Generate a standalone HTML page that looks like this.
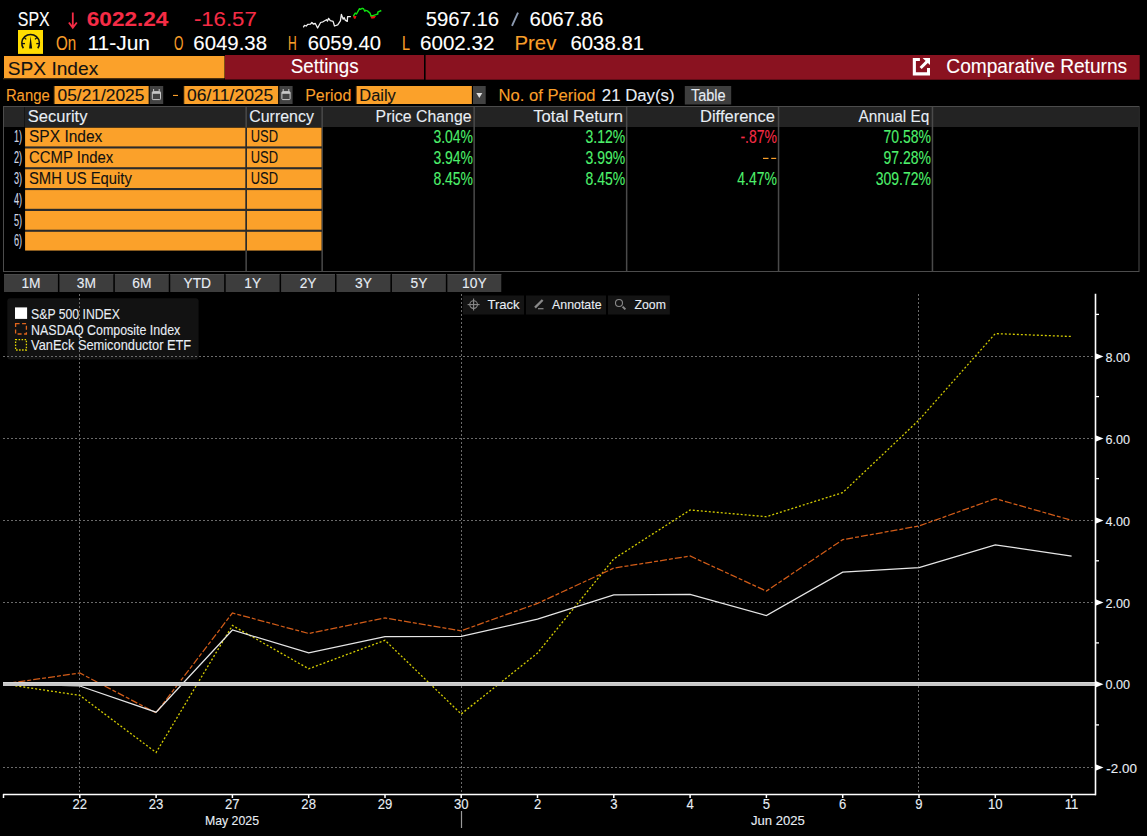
<!DOCTYPE html>
<html><head><meta charset="utf-8"><style>
html,body{margin:0;padding:0;background:#000;width:1147px;height:836px;overflow:hidden}
svg{display:block}
text{font-family:"Liberation Sans",sans-serif;white-space:pre}
</style></head><body>
<svg width="1147" height="836" viewBox="0 0 1147 836">
<rect width="1147" height="836" fill="#000"/>
<text transform="translate(17.80,26.00) scale(0.783,1)" font-size="20.35" fill="#ffffff" stroke="#ffffff" stroke-width="0.1" font-weight="normal">SPX</text>
<text transform="translate(86.80,26.00) scale(1.109,1)" font-size="20.35" fill="#f52c46" stroke="#f52c46" stroke-width="0.1" font-weight="bold">6022.24</text>
<text transform="translate(193.90,26.00) scale(1.089,1)" font-size="20.35" fill="#f52c46" stroke="#f52c46" stroke-width="0.1" font-weight="normal">-16.57</text>
<text transform="translate(425.80,25.80) scale(1.035,1)" font-size="19.62" fill="#ffffff" stroke="#ffffff" stroke-width="0.1" font-weight="normal">5967.16</text>
<text transform="translate(529.60,25.80) scale(1.040,1)" font-size="19.62" fill="#ffffff" stroke="#ffffff" stroke-width="0.1" font-weight="normal">6067.86</text>
<line x1="512" y1="25.8" x2="518" y2="12.6" stroke="#8c9ab0" stroke-width="1.9"/>
<path d="M72.8 12.4 V27 M68.9 22.5 L72.8 27.8 L76.8 22.5" stroke="#f52c46" stroke-width="1.8" fill="none"/>
<text transform="translate(55.90,49.80) scale(0.777,1)" font-size="19.48" fill="#f99f2a" stroke="#f99f2a" stroke-width="0.1" font-weight="normal">On</text>
<text transform="translate(87.40,49.80) scale(1.077,1)" font-size="19.48" fill="#ffffff" stroke="#ffffff" stroke-width="0.1" font-weight="normal">11-Jun</text>
<text transform="translate(174.00,49.80) scale(0.620,1)" font-size="19.48" fill="#f99f2a" stroke="#f99f2a" stroke-width="0.1" font-weight="normal">O</text>
<text transform="translate(193.30,49.80) scale(1.047,1)" font-size="19.48" fill="#ffffff" stroke="#ffffff" stroke-width="0.1" font-weight="normal">6049.38</text>
<text transform="translate(288.00,49.80) scale(0.619,1)" font-size="19.48" fill="#f99f2a" stroke="#f99f2a" stroke-width="0.1" font-weight="normal">H</text>
<text transform="translate(307.80,49.80) scale(1.040,1)" font-size="19.48" fill="#ffffff" stroke="#ffffff" stroke-width="0.1" font-weight="normal">6059.40</text>
<text transform="translate(402.00,49.80) scale(0.739,1)" font-size="19.48" fill="#f99f2a" stroke="#f99f2a" stroke-width="0.1" font-weight="normal">L</text>
<text transform="translate(420.00,49.80) scale(1.057,1)" font-size="19.48" fill="#ffffff" stroke="#ffffff" stroke-width="0.1" font-weight="normal">6002.32</text>
<text transform="translate(514.50,49.80) scale(1.046,1)" font-size="19.48" fill="#f99f2a" stroke="#f99f2a" stroke-width="0.1" font-weight="normal">Prev</text>
<text transform="translate(570.40,49.80) scale(1.048,1)" font-size="19.48" fill="#ffffff" stroke="#ffffff" stroke-width="0.1" font-weight="normal">6038.81</text>
<rect x="18.00" y="30.00" width="25.00" height="23.90" fill="#ffdc00" />
<path d="M23.4 48.3 A 8.8 8.8 0 1 1 37.8 48.3" fill="none" stroke="#111" stroke-width="1.5"/>
<path d="M29.1 48.6 L30.6 35.9 L32.1 48.6 Z" fill="#111"/>
<g stroke="#111" stroke-width="1.3"><line x1="21.8" y1="43.6" x2="25" y2="43.6"/><line x1="36.3" y1="43.6" x2="39.5" y2="43.6"/><line x1="24.3" y1="37.5" x2="26.2" y2="39.4"/><line x1="36.9" y1="37.5" x2="35" y2="39.4"/></g>
<polyline points="303.3,27.3 304.5,25.4 306.3,26 307.7,24.4 310.5,24.2 311.9,22.5 313.3,24 315.3,23.5 317.6,28 320.6,22.5 323,21.8 326.5,19.7 327.5,21.1 328.6,18.3 330.3,20.7 333.1,21.4 334.5,26 337.7,24.9 338.6,23.6 340.4,20.9 341.4,14.4 342.5,17.5 343.2,19.2 344.1,17.5 345.2,20.1 347.3,21.4 347.6,16.6 350.8,16.6" fill="none" stroke="#f0f0f0" stroke-width="1.3" stroke-linejoin="round"/>
<path d="M353 16 H356.5 L355.5 18.8 H354 Z M370.2 16 H376 L374.5 18.3 L371.5 18.8 Z" fill="#e81010"/>
<polyline points="353.4,16.1 355.2,13.1 356.5,14 359.5,8.7 360.4,9.4 362.2,8.3 363.5,8.7 364.8,11.3 365.6,10.3 367.4,10.9 370,13.1 370.9,15.7 373,15.7 375.2,14.8 377.8,14 377.8,12.2 381.3,10.5" fill="none" stroke="#10e010" stroke-width="1.4" stroke-linejoin="round"/>
<rect x="4.00" y="56.00" width="220.50" height="22.00" fill="#fba12a" />
<rect x="3.00" y="78.00" width="221.50" height="1.30" fill="#4a3010" />
<rect x="225.00" y="55.00" width="199.00" height="24.50" fill="#8a1220" />
<rect x="425.60" y="55.00" width="714.10" height="24.70" fill="#8a1220" />
<text transform="translate(7.80,74.60) scale(1.006,1)" font-size="19.04" fill="#111" stroke="#111" stroke-width="0.1" font-weight="normal">SPX Index</text>
<text transform="translate(290.70,72.70) scale(0.945,1)" font-size="19.91" fill="#ffffff" stroke="#ffffff" stroke-width="0.1" font-weight="normal">Settings</text>
<text transform="translate(946.30,72.60) scale(0.969,1)" font-size="19.77" fill="#ffffff" stroke="#ffffff" stroke-width="0.1" font-weight="normal">Comparative Returns</text>
<path d="M912.8 58 H919.9 V61.1 H915.9 V72.3 H927 V68 H930 V75.6 H912.8 Z" fill="#fff"/>
<path d="M922.6 58 H930 V65 Z" fill="#fff"/>
<line x1="920.6" y1="68" x2="927.5" y2="61.1" stroke="#fff" stroke-width="3"/>
<text transform="translate(5.90,101.20) scale(0.921,1)" font-size="16.13" fill="#f99f2a" stroke="#f99f2a" stroke-width="0.1" font-weight="normal">Range</text>
<rect x="53.60" y="86.00" width="95.00" height="18.00" fill="#3a2a10" />
<rect x="54.60" y="86.00" width="94.00" height="18.00" fill="#fba12a" />
<text transform="translate(57.50,101.20) scale(1.077,1)" font-size="16.13" fill="#111" stroke="#111" stroke-width="0.1" font-weight="normal">05/21/2025</text>
<rect x="149.70" y="86.00" width="13.50" height="18.00" fill="#424242" />
<rect x="173.00" y="94.90" width="5.00" height="1.10" fill="#f99f2a" />
<rect x="183.30" y="86.00" width="94.80" height="18.00" fill="#3a2a10" />
<rect x="184.30" y="86.00" width="93.80" height="18.00" fill="#fba12a" />
<text transform="translate(187.10,101.20) scale(1.085,1)" font-size="16.13" fill="#111" stroke="#111" stroke-width="0.1" font-weight="normal">06/11/2025</text>
<rect x="279.40" y="86.00" width="13.20" height="18.00" fill="#424242" />
<g fill="none" stroke="#c8c8c8" stroke-width="1"><rect x="152.3" y="91.6" width="8.2" height="8" rx="0.8"/><line x1="152.3" y1="92.9" x2="160.5" y2="92.9" stroke-width="1.8"/><line x1="153.6" y1="89" x2="153.6" y2="91.6"/><line x1="159.2" y1="89" x2="159.2" y2="91.6"/></g>
<g fill="none" stroke="#c8c8c8" stroke-width="1"><rect x="281.9" y="91.6" width="8.2" height="8" rx="0.8"/><line x1="281.9" y1="92.9" x2="290.1" y2="92.9" stroke-width="1.8"/><line x1="283.2" y1="89" x2="283.2" y2="91.6"/><line x1="288.8" y1="89" x2="288.8" y2="91.6"/></g>
<text transform="translate(305.20,101.20) scale(0.991,1)" font-size="16.13" fill="#f99f2a" stroke="#f99f2a" stroke-width="0.1" font-weight="normal">Period</text>
<rect x="355.70" y="86.00" width="116.10" height="18.00" fill="#3a2a10" />
<rect x="356.70" y="86.00" width="115.10" height="18.00" fill="#fba12a" />
<text transform="translate(359.30,101.20) scale(1.020,1)" font-size="16.13" fill="#111" stroke="#111" stroke-width="0.1" font-weight="normal">Daily</text>
<rect x="473.00" y="86.00" width="12.70" height="18.00" fill="#424242" />
<path d="M476.3 93 H482.3 L479.3 98 Z" fill="#ddd"/>
<text transform="translate(498.60,101.20) scale(1.030,1)" font-size="16.13" fill="#f99f2a" stroke="#f99f2a" stroke-width="0.1" font-weight="normal">No. of Period</text>
<text transform="translate(601.80,101.20) scale(1.041,1)" font-size="16.13" fill="#e8eef5" stroke="#e8eef5" stroke-width="0.1" font-weight="normal">21 Day(s)</text>
<rect x="684.80" y="86.00" width="46.40" height="18.50" fill="#3e3e3e" />
<text transform="translate(690.90,101.20) scale(0.900,1)" font-size="16.13" fill="#e8eef5" stroke="#e8eef5" stroke-width="0.1" font-weight="normal">Table</text>
<rect x="3.00" y="106.00" width="1136.50" height="166.00" fill="#4c4c4c" />
<rect x="4.00" y="107.00" width="1134.50" height="164.00" fill="#000" />
<rect x="4.00" y="107.00" width="1134.50" height="20.00" fill="#232323" />
<rect x="4.00" y="107.00" width="20.50" height="20.00" fill="#262626" />
<rect x="245.40" y="107.00" width="1.50" height="164.00" fill="#4a4a4a" />
<rect x="321.40" y="107.00" width="1.50" height="164.00" fill="#4a4a4a" />
<rect x="473.40" y="107.00" width="1.50" height="164.00" fill="#4a4a4a" />
<rect x="625.90" y="107.00" width="1.50" height="164.00" fill="#4a4a4a" />
<rect x="777.80" y="107.00" width="1.50" height="164.00" fill="#4a4a4a" />
<rect x="931.70" y="107.00" width="1.50" height="164.00" fill="#4a4a4a" />
<rect x="24.00" y="107.00" width="1.00" height="20.00" fill="#151515" />
<text transform="translate(27.80,122.20) scale(0.964,1)" font-size="17.15" fill="#e8eef5" stroke="#e8eef5" stroke-width="0.1" font-weight="normal">Security</text>
<text transform="translate(249.20,122.20) scale(0.930,1)" font-size="17.15" fill="#e8eef5" stroke="#e8eef5" stroke-width="0.1" font-weight="normal">Currency</text>
<text transform="translate(375.60,122.20) scale(0.923,1)" font-size="17.15" fill="#e8eef5" stroke="#e8eef5" stroke-width="0.1" font-weight="normal">Price Change</text>
<text transform="translate(533.30,122.20) scale(0.970,1)" font-size="17.15" fill="#e8eef5" stroke="#e8eef5" stroke-width="0.1" font-weight="normal">Total Return</text>
<text transform="translate(700.00,122.20) scale(0.963,1)" font-size="17.15" fill="#e8eef5" stroke="#e8eef5" stroke-width="0.1" font-weight="normal">Difference</text>
<text transform="translate(858.40,122.20) scale(0.897,1)" font-size="17.15" fill="#e8eef5" stroke="#e8eef5" stroke-width="0.1" font-weight="normal">Annual Eq</text>
<rect x="25.10" y="127.70" width="296.40" height="122.80" fill="#2a2a2a" />
<rect x="25.10" y="127.70" width="220.20" height="18.70" fill="#fba12a" />
<rect x="247.00" y="127.70" width="74.50" height="18.70" fill="#fba12a" />
<rect x="4.00" y="127.70" width="20.50" height="18.70" fill="#000" />
<rect x="25.10" y="148.50" width="220.20" height="18.70" fill="#fba12a" />
<rect x="247.00" y="148.50" width="74.50" height="18.70" fill="#fba12a" />
<rect x="4.00" y="148.50" width="20.50" height="18.70" fill="#000" />
<rect x="25.10" y="169.30" width="220.20" height="18.70" fill="#fba12a" />
<rect x="247.00" y="169.30" width="74.50" height="18.70" fill="#fba12a" />
<rect x="4.00" y="169.30" width="20.50" height="18.70" fill="#000" />
<rect x="25.10" y="190.10" width="220.20" height="18.70" fill="#fba12a" />
<rect x="247.00" y="190.10" width="74.50" height="18.70" fill="#fba12a" />
<rect x="4.00" y="190.10" width="20.50" height="18.70" fill="#000" />
<rect x="25.10" y="211.00" width="220.20" height="18.70" fill="#fba12a" />
<rect x="247.00" y="211.00" width="74.50" height="18.70" fill="#fba12a" />
<rect x="4.00" y="211.00" width="20.50" height="18.70" fill="#000" />
<rect x="25.10" y="231.80" width="220.20" height="18.70" fill="#fba12a" />
<rect x="247.00" y="231.80" width="74.50" height="18.70" fill="#fba12a" />
<rect x="4.00" y="231.80" width="20.50" height="18.70" fill="#000" />
<text transform="translate(29.00,141.70) scale(0.938,1)" font-size="16.57" fill="#111" stroke="#111" stroke-width="0.1" font-weight="normal">SPX Index</text>
<text transform="translate(250.70,141.70) scale(0.780,1)" font-size="16.57" fill="#111" stroke="#111" stroke-width="0.1" font-weight="normal">USD</text>
<text transform="translate(29.00,162.70) scale(0.900,1)" font-size="16.57" fill="#111" stroke="#111" stroke-width="0.1" font-weight="normal">CCMP Index</text>
<text transform="translate(250.70,162.70) scale(0.780,1)" font-size="16.57" fill="#111" stroke="#111" stroke-width="0.1" font-weight="normal">USD</text>
<text transform="translate(29.00,183.70) scale(0.894,1)" font-size="16.57" fill="#111" stroke="#111" stroke-width="0.1" font-weight="normal">SMH US Equity</text>
<text transform="translate(250.70,183.70) scale(0.780,1)" font-size="16.57" fill="#111" stroke="#111" stroke-width="0.1" font-weight="normal">USD</text>
<text transform="translate(14.00,141.90) scale(0.570,1)" font-size="15.99" fill="#cfd8e6" stroke="#cfd8e6" stroke-width="0.1" font-weight="normal">1)</text>
<text transform="translate(14.00,162.80) scale(0.570,1)" font-size="15.99" fill="#cfd8e6" stroke="#cfd8e6" stroke-width="0.1" font-weight="normal">2)</text>
<text transform="translate(14.00,183.70) scale(0.570,1)" font-size="15.99" fill="#cfd8e6" stroke="#cfd8e6" stroke-width="0.1" font-weight="normal">3)</text>
<text transform="translate(14.00,204.60) scale(0.570,1)" font-size="15.99" fill="#cfd8e6" stroke="#cfd8e6" stroke-width="0.1" font-weight="normal">4)</text>
<text transform="translate(14.00,225.50) scale(0.570,1)" font-size="15.99" fill="#cfd8e6" stroke="#cfd8e6" stroke-width="0.1" font-weight="normal">5)</text>
<text transform="translate(14.00,246.40) scale(0.570,1)" font-size="15.99" fill="#cfd8e6" stroke="#cfd8e6" stroke-width="0.1" font-weight="normal">6)</text>
<text transform="translate(433.40,143.00) scale(0.796,1)" font-size="17.59" fill="#4ef06c" stroke="#4ef06c" stroke-width="0.1" font-weight="normal">3.04%</text>
<text transform="translate(585.50,143.00) scale(0.796,1)" font-size="17.59" fill="#4ef06c" stroke="#4ef06c" stroke-width="0.1" font-weight="normal">3.12%</text>
<text transform="translate(740.42,143.00) scale(0.796,1)" font-size="17.59" fill="#f52c46" stroke="#f52c46" stroke-width="0.1" font-weight="normal">-.87%</text>
<text transform="translate(883.50,143.00) scale(0.796,1)" font-size="17.59" fill="#4ef06c" stroke="#4ef06c" stroke-width="0.1" font-weight="normal">70.58%</text>
<text transform="translate(433.40,163.90) scale(0.796,1)" font-size="17.59" fill="#4ef06c" stroke="#4ef06c" stroke-width="0.1" font-weight="normal">3.94%</text>
<text transform="translate(585.50,163.90) scale(0.796,1)" font-size="17.59" fill="#4ef06c" stroke="#4ef06c" stroke-width="0.1" font-weight="normal">3.99%</text>
<rect x="763.00" y="157.80" width="5.50" height="1.20" fill="#f99f2a" />
<rect x="771.20" y="157.80" width="5.00" height="1.20" fill="#f99f2a" />
<text transform="translate(883.50,163.90) scale(0.796,1)" font-size="17.59" fill="#4ef06c" stroke="#4ef06c" stroke-width="0.1" font-weight="normal">97.28%</text>
<text transform="translate(433.40,184.80) scale(0.796,1)" font-size="17.59" fill="#4ef06c" stroke="#4ef06c" stroke-width="0.1" font-weight="normal">8.45%</text>
<text transform="translate(585.50,184.80) scale(0.796,1)" font-size="17.59" fill="#4ef06c" stroke="#4ef06c" stroke-width="0.1" font-weight="normal">8.45%</text>
<text transform="translate(737.30,184.80) scale(0.796,1)" font-size="17.59" fill="#4ef06c" stroke="#4ef06c" stroke-width="0.1" font-weight="normal">4.47%</text>
<text transform="translate(875.71,184.80) scale(0.796,1)" font-size="17.59" fill="#4ef06c" stroke="#4ef06c" stroke-width="0.1" font-weight="normal">309.72%</text>
<rect x="4.00" y="274.00" width="53.90" height="18.00" fill="#3d3d3d" />
<rect x="4.00" y="274.00" width="53.90" height="1.00" fill="#494949" />
<text transform="translate(21.41,287.60) scale(0.950,1)" font-size="14.53" fill="#e8eef5" stroke="#e8eef5" stroke-width="0.1" font-weight="normal">1M</text>
<rect x="59.42" y="274.00" width="53.90" height="18.00" fill="#3d3d3d" />
<rect x="59.42" y="274.00" width="53.90" height="1.00" fill="#494949" />
<text transform="translate(76.83,287.60) scale(0.950,1)" font-size="14.53" fill="#e8eef5" stroke="#e8eef5" stroke-width="0.1" font-weight="normal">3M</text>
<rect x="114.84" y="274.00" width="53.90" height="18.00" fill="#3d3d3d" />
<rect x="114.84" y="274.00" width="53.90" height="1.00" fill="#494949" />
<text transform="translate(132.25,287.60) scale(0.950,1)" font-size="14.53" fill="#e8eef5" stroke="#e8eef5" stroke-width="0.1" font-weight="normal">6M</text>
<rect x="170.26" y="274.00" width="53.90" height="18.00" fill="#3d3d3d" />
<rect x="170.26" y="274.00" width="53.90" height="1.00" fill="#494949" />
<text transform="translate(183.45,287.60) scale(0.950,1)" font-size="14.53" fill="#e8eef5" stroke="#e8eef5" stroke-width="0.1" font-weight="normal">YTD</text>
<rect x="225.68" y="274.00" width="53.90" height="18.00" fill="#3d3d3d" />
<rect x="225.68" y="274.00" width="53.90" height="1.00" fill="#494949" />
<text transform="translate(244.24,287.60) scale(0.950,1)" font-size="14.53" fill="#e8eef5" stroke="#e8eef5" stroke-width="0.1" font-weight="normal">1Y</text>
<rect x="281.10" y="274.00" width="53.90" height="18.00" fill="#3d3d3d" />
<rect x="281.10" y="274.00" width="53.90" height="1.00" fill="#494949" />
<text transform="translate(299.66,287.60) scale(0.950,1)" font-size="14.53" fill="#e8eef5" stroke="#e8eef5" stroke-width="0.1" font-weight="normal">2Y</text>
<rect x="336.52" y="274.00" width="53.90" height="18.00" fill="#3d3d3d" />
<rect x="336.52" y="274.00" width="53.90" height="1.00" fill="#494949" />
<text transform="translate(355.08,287.60) scale(0.950,1)" font-size="14.53" fill="#e8eef5" stroke="#e8eef5" stroke-width="0.1" font-weight="normal">3Y</text>
<rect x="391.94" y="274.00" width="53.90" height="18.00" fill="#3d3d3d" />
<rect x="391.94" y="274.00" width="53.90" height="1.00" fill="#494949" />
<text transform="translate(410.50,287.60) scale(0.950,1)" font-size="14.53" fill="#e8eef5" stroke="#e8eef5" stroke-width="0.1" font-weight="normal">5Y</text>
<rect x="447.36" y="274.00" width="53.90" height="18.00" fill="#3d3d3d" />
<rect x="447.36" y="274.00" width="53.90" height="1.00" fill="#494949" />
<text transform="translate(462.08,287.60) scale(0.950,1)" font-size="14.53" fill="#e8eef5" stroke="#e8eef5" stroke-width="0.1" font-weight="normal">10Y</text>
<rect x="7.3" y="298.2" width="191.3" height="61.4" rx="3" fill="#121212"/>
<line x1="3" y1="356.5" x2="1095" y2="356.5" stroke="#6a6a6a" stroke-width="1" stroke-dasharray="2 2"/>
<line x1="3" y1="438.5" x2="1095" y2="438.5" stroke="#6a6a6a" stroke-width="1" stroke-dasharray="2 2"/>
<line x1="3" y1="520.5" x2="1095" y2="520.5" stroke="#6a6a6a" stroke-width="1" stroke-dasharray="2 2"/>
<line x1="3" y1="602.5" x2="1095" y2="602.5" stroke="#6a6a6a" stroke-width="1" stroke-dasharray="2 2"/>
<line x1="3" y1="767.5" x2="1095" y2="767.5" stroke="#6a6a6a" stroke-width="1" stroke-dasharray="2 2"/>
<line x1="79.5" y1="294" x2="79.5" y2="794" stroke="#6a6a6a" stroke-width="1" stroke-dasharray="2 2"/>
<line x1="461.5" y1="294" x2="461.5" y2="794" stroke="#6a6a6a" stroke-width="1" stroke-dasharray="2 2"/>
<line x1="918.5" y1="294" x2="918.5" y2="794" stroke="#6a6a6a" stroke-width="1" stroke-dasharray="2 2"/>
<rect x="15.00" y="307.40" width="12.10" height="11.50" fill="#ffffff" />
<rect x="15.6" y="323.6" width="10.8" height="10.4" fill="none" stroke="#e0641c" stroke-width="1.3" stroke-dasharray="4 2.5"/>
<rect x="15.6" y="339.6" width="10.8" height="10.4" fill="none" stroke="#e8dc00" stroke-width="1.3" stroke-dasharray="1.5 1.5"/>
<text transform="translate(31.10,318.90) scale(0.868,1)" font-size="14.10" fill="#e8eef5" stroke="#e8eef5" stroke-width="0.1" font-weight="normal">S&amp;P 500 INDEX</text>
<text transform="translate(31.10,334.90) scale(0.882,1)" font-size="14.10" fill="#e8eef5" stroke="#e8eef5" stroke-width="0.1" font-weight="normal">NASDAQ Composite Index</text>
<text transform="translate(31.10,350.40) scale(0.910,1)" font-size="14.10" fill="#e8eef5" stroke="#e8eef5" stroke-width="0.1" font-weight="normal">VanEck Semiconductor ETF</text>
<rect x="462.80" y="295.50" width="61.20" height="19.00" fill="#141414" />
<rect x="526.00" y="295.50" width="80.00" height="19.00" fill="#141414" />
<rect x="608.00" y="295.50" width="61.80" height="19.00" fill="#141414" />
<text transform="translate(487.40,309.00) scale(0.980,1)" font-size="13.37" fill="#e8eef5" stroke="#e8eef5" stroke-width="0.1" font-weight="normal">Track</text>
<text transform="translate(552.00,309.00) scale(0.928,1)" font-size="13.37" fill="#e8eef5" stroke="#e8eef5" stroke-width="0.1" font-weight="normal">Annotate</text>
<text transform="translate(634.50,309.00) scale(0.919,1)" font-size="13.37" fill="#e8eef5" stroke="#e8eef5" stroke-width="0.1" font-weight="normal">Zoom</text>
<g stroke="#8a8a8a" stroke-width="1.1" fill="none"><circle cx="473.6" cy="304.6" r="3.8"/><line x1="467.6" y1="304.6" x2="479.6" y2="304.6"/><line x1="473.6" y1="298.6" x2="473.6" y2="310.6"/></g>
<g stroke="#8a8a8a" fill="none"><line x1="535" y1="307.6" x2="542.6" y2="300" stroke-width="2.3"/><line x1="538" y1="308.7" x2="543.5" y2="308.7" stroke-width="1.2"/></g>
<g stroke="#8a8a8a" stroke-width="1.3" fill="none"><circle cx="619" cy="303" r="3.5" stroke-width="1.1"/><line x1="622.6" y1="306.6" x2="625.4" y2="309.4" stroke-width="2"/></g>
<polyline points="3.5,684.0 79.8,695.4 156.1,752.5 232.4,625.5 308.7,668.8 385.0,640.3 461.2,714.0 537.5,653.0 613.8,558.9 690.1,510.0 766.4,516.7 842.7,492.6 919.0,420.0 995.3,333.6 1071.6,336.5" fill="none" stroke="#d4cc00" stroke-width="1.3" stroke-dasharray="2 2"/>
<polyline points="3.5,684.0 79.8,673.0 156.1,712.9 232.4,613.0 308.7,633.5 385.0,617.9 461.2,630.8 537.5,603.4 613.8,568.1 690.1,556.0 766.4,591.1 842.7,539.7 919.0,526.0 995.3,498.6 1071.6,520.3" fill="none" stroke="#d25c18" stroke-width="1.25" stroke-dasharray="7 2 4 2"/>
<polyline points="3.5,684.0 79.8,686.0 156.1,712.2 232.4,630.0 308.7,652.8 385.0,636.7 461.2,636.4 537.5,619.2 613.8,594.8 690.1,594.4 766.4,615.5 842.7,572.2 919.0,567.6 995.3,544.8 1071.6,556.1" fill="none" stroke="#e6e6e6" stroke-width="1.25"/>
<rect x="3.00" y="682.00" width="1092.00" height="4.00" fill="#c8c8c8" />
<rect x="3.00" y="682.00" width="1092.00" height="0.80" fill="#dcdcdc" />
<line x1="1095.5" y1="293.8" x2="1095.5" y2="795.2" stroke="#fff" stroke-width="1.6"/>
<line x1="3" y1="794.5" x2="1096" y2="794.5" stroke="#fff" stroke-width="1.6"/>
<line x1="3.5" y1="794" x2="3.5" y2="798" stroke="#fff" stroke-width="1.5"/>
<line x1="79.8" y1="794" x2="79.8" y2="798" stroke="#fff" stroke-width="1.5"/>
<line x1="156.1" y1="794" x2="156.1" y2="798" stroke="#fff" stroke-width="1.5"/>
<line x1="232.4" y1="794" x2="232.4" y2="798" stroke="#fff" stroke-width="1.5"/>
<line x1="308.7" y1="794" x2="308.7" y2="798" stroke="#fff" stroke-width="1.5"/>
<line x1="385.0" y1="794" x2="385.0" y2="798" stroke="#fff" stroke-width="1.5"/>
<line x1="461.2" y1="794" x2="461.2" y2="798" stroke="#fff" stroke-width="1.5"/>
<line x1="537.5" y1="794" x2="537.5" y2="798" stroke="#fff" stroke-width="1.5"/>
<line x1="613.8" y1="794" x2="613.8" y2="798" stroke="#fff" stroke-width="1.5"/>
<line x1="690.1" y1="794" x2="690.1" y2="798" stroke="#fff" stroke-width="1.5"/>
<line x1="766.4" y1="794" x2="766.4" y2="798" stroke="#fff" stroke-width="1.5"/>
<line x1="842.7" y1="794" x2="842.7" y2="798" stroke="#fff" stroke-width="1.5"/>
<line x1="919.0" y1="794" x2="919.0" y2="798" stroke="#fff" stroke-width="1.5"/>
<line x1="995.3" y1="794" x2="995.3" y2="798" stroke="#fff" stroke-width="1.5"/>
<line x1="1071.6" y1="794" x2="1071.6" y2="798" stroke="#fff" stroke-width="1.5"/>
<line x1="1095" y1="314.4" x2="1099" y2="314.4" stroke="#fff" stroke-width="1.3"/>
<line x1="1095" y1="396.6" x2="1099" y2="396.6" stroke="#fff" stroke-width="1.3"/>
<line x1="1095" y1="478.6" x2="1099" y2="478.6" stroke="#fff" stroke-width="1.3"/>
<line x1="1095" y1="560.8" x2="1099" y2="560.8" stroke="#fff" stroke-width="1.3"/>
<line x1="1095" y1="642.9" x2="1099" y2="642.9" stroke="#fff" stroke-width="1.3"/>
<line x1="1095" y1="724.9" x2="1099" y2="724.9" stroke="#fff" stroke-width="1.3"/>
<path d="M1095.5 353.2 L1103.5 356.5 L1095.5 359.8 Z" fill="#fff"/>
<text transform="translate(1105.50,361.60) scale(0.931,1)" font-size="13.52" fill="#e8eef5" stroke="#e8eef5" stroke-width="0.1" font-weight="normal">8.00</text>
<path d="M1095.5 435.2 L1103.5 438.5 L1095.5 441.8 Z" fill="#fff"/>
<text transform="translate(1105.50,443.60) scale(0.931,1)" font-size="13.52" fill="#e8eef5" stroke="#e8eef5" stroke-width="0.1" font-weight="normal">6.00</text>
<path d="M1095.5 517.2 L1103.5 520.5 L1095.5 523.8 Z" fill="#fff"/>
<text transform="translate(1105.50,525.60) scale(0.931,1)" font-size="13.52" fill="#e8eef5" stroke="#e8eef5" stroke-width="0.1" font-weight="normal">4.00</text>
<path d="M1095.5 599.2 L1103.5 602.5 L1095.5 605.8 Z" fill="#fff"/>
<text transform="translate(1105.50,607.60) scale(0.931,1)" font-size="13.52" fill="#e8eef5" stroke="#e8eef5" stroke-width="0.1" font-weight="normal">2.00</text>
<path d="M1095.5 680.9 L1103.5 684.2 L1095.5 687.5 Z" fill="#fff"/>
<text transform="translate(1105.50,689.30) scale(0.931,1)" font-size="13.52" fill="#e8eef5" stroke="#e8eef5" stroke-width="0.1" font-weight="normal">0.00</text>
<path d="M1095.5 764.2 L1103.5 767.5 L1095.5 770.8 Z" fill="#fff"/>
<text transform="translate(1106.30,772.60) scale(0.993,1)" font-size="13.52" fill="#e8eef5" stroke="#e8eef5" stroke-width="0.1" font-weight="normal">-2.00</text>
<text transform="translate(72.50,809.00) scale(0.950,1)" font-size="13.81" fill="#e8eef5" stroke="#e8eef5" stroke-width="0.1" font-weight="normal">22</text>
<text transform="translate(148.79,809.00) scale(0.950,1)" font-size="13.81" fill="#e8eef5" stroke="#e8eef5" stroke-width="0.1" font-weight="normal">23</text>
<text transform="translate(225.08,809.00) scale(0.950,1)" font-size="13.81" fill="#e8eef5" stroke="#e8eef5" stroke-width="0.1" font-weight="normal">27</text>
<text transform="translate(301.37,809.00) scale(0.950,1)" font-size="13.81" fill="#e8eef5" stroke="#e8eef5" stroke-width="0.1" font-weight="normal">28</text>
<text transform="translate(377.66,809.00) scale(0.950,1)" font-size="13.81" fill="#e8eef5" stroke="#e8eef5" stroke-width="0.1" font-weight="normal">29</text>
<text transform="translate(453.95,809.00) scale(0.950,1)" font-size="13.81" fill="#e8eef5" stroke="#e8eef5" stroke-width="0.1" font-weight="normal">30</text>
<text transform="translate(533.88,809.00) scale(0.950,1)" font-size="13.81" fill="#e8eef5" stroke="#e8eef5" stroke-width="0.1" font-weight="normal">2</text>
<text transform="translate(610.17,809.00) scale(0.950,1)" font-size="13.81" fill="#e8eef5" stroke="#e8eef5" stroke-width="0.1" font-weight="normal">3</text>
<text transform="translate(686.46,809.00) scale(0.950,1)" font-size="13.81" fill="#e8eef5" stroke="#e8eef5" stroke-width="0.1" font-weight="normal">4</text>
<text transform="translate(762.75,809.00) scale(0.950,1)" font-size="13.81" fill="#e8eef5" stroke="#e8eef5" stroke-width="0.1" font-weight="normal">5</text>
<text transform="translate(839.04,809.00) scale(0.950,1)" font-size="13.81" fill="#e8eef5" stroke="#e8eef5" stroke-width="0.1" font-weight="normal">6</text>
<text transform="translate(915.33,809.00) scale(0.950,1)" font-size="13.81" fill="#e8eef5" stroke="#e8eef5" stroke-width="0.1" font-weight="normal">9</text>
<text transform="translate(987.98,809.00) scale(0.950,1)" font-size="13.81" fill="#e8eef5" stroke="#e8eef5" stroke-width="0.1" font-weight="normal">10</text>
<text transform="translate(1064.75,809.00) scale(0.950,1)" font-size="13.81" fill="#e8eef5" stroke="#e8eef5" stroke-width="0.1" font-weight="normal">11</text>
<text transform="translate(204.90,824.60) scale(0.902,1)" font-size="13.66" fill="#e8eef5" stroke="#e8eef5" stroke-width="0.1" font-weight="normal">May 2025</text>
<text transform="translate(751.00,824.60) scale(0.960,1)" font-size="13.66" fill="#e8eef5" stroke="#e8eef5" stroke-width="0.1" font-weight="normal">Jun 2025</text>
<line x1="461.5" y1="811" x2="461.5" y2="828" stroke="#9a9a9a" stroke-width="1.2"/>
</svg>
</body></html>
